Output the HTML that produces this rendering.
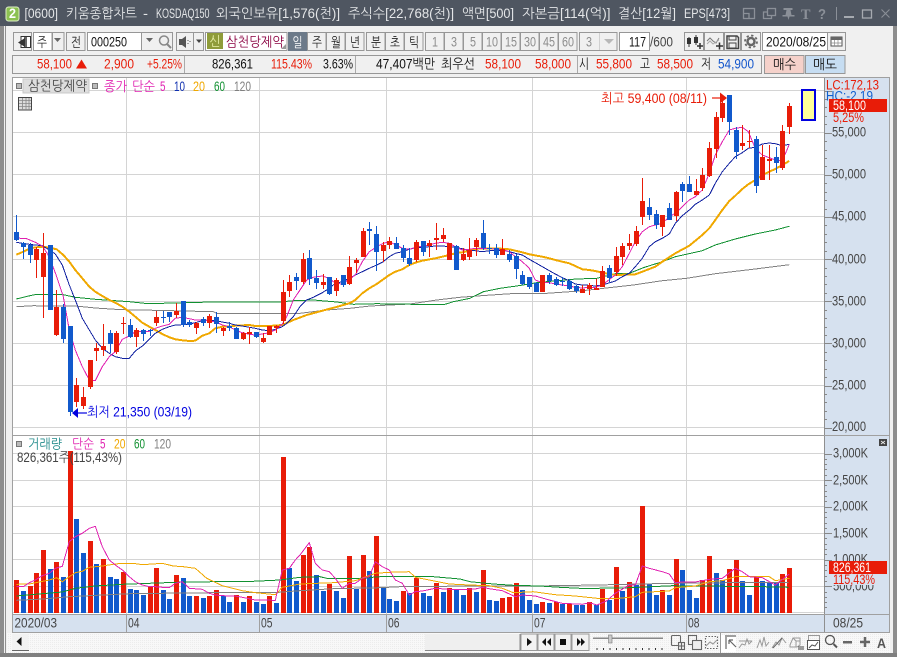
<!DOCTYPE html>
<html lang="ko"><head><meta charset="utf-8"><title>키움종합차트</title>
<style>
html,body{margin:0;padding:0;background:#f0f0f0;width:897px;height:657px;overflow:hidden}
svg{display:block;position:absolute;left:0;top:0}
text{font-family:"Liberation Sans","NanumGothic","Noto Sans CJK KR",sans-serif;font-size:13.5px;fill:#222}
.t text{fill:#e4e6e8}
.b{fill:#f0f0f0;stroke:#979797}
.g{stroke:#d4d4d4;stroke-width:1;shape-rendering:crispEdges}
.r{fill:#e81c08!important}.u{fill:#1155cc!important}.a{fill:#444!important}.d{fill:#8c8c8c!important}
.ic{fill:none;stroke:#555;stroke-width:1}
</style></head><body>
<svg width="897" height="657" viewBox="0 0 897 657" xmlns="http://www.w3.org/2000/svg">
<defs><pattern id="dot" width="2" height="2" patternUnits="userSpaceOnUse"><rect width="2" height="2" fill="#f8f8f8"/><rect width="1" height="1" fill="#ececec"/></pattern></defs>
<rect width="897" height="657" fill="#f0f0f0"/>
<!-- outer border -->
<rect x="0" y="26" width="4" height="631" fill="#8d8d8d"/><rect x="5" y="26" width="1" height="627" fill="#909090"/>
<rect x="893" y="26" width="4" height="631" fill="#8d8d8d"/><rect x="0" y="653" width="897" height="4" fill="#7f7f7f"/>
<!-- title bar -->
<rect width="897" height="26" fill="#4f5661"/>
<rect x="6" y="7" width="13" height="14" rx="2.5" fill="#8cc152" stroke="#dff0c8"/>
<text x="9" y="18" textLength="7" lengthAdjust="spacingAndGlyphs" style="fill:#fff;font-weight:bold">2</text>
<g class="t">
<text x="24.5" y="18" textLength="33.5" lengthAdjust="spacingAndGlyphs">[0600]</text>
<text x="66" y="18" textLength="71" lengthAdjust="spacingAndGlyphs">키움종합차트</text>
<text x="143" y="18" textLength="5" lengthAdjust="spacingAndGlyphs">-</text>
<text x="156" y="18" textLength="53.5" lengthAdjust="spacingAndGlyphs">KOSDAQ150</text>
<text x="216" y="18" textLength="124" lengthAdjust="spacingAndGlyphs">외국인보유[1,576(천)]</text>
<text x="348" y="18" textLength="106" lengthAdjust="spacingAndGlyphs">주식수[22,768(천)]</text>
<text x="462" y="18" textLength="52" lengthAdjust="spacingAndGlyphs">액면[500]</text>
<text x="522" y="18" textLength="88.5" lengthAdjust="spacingAndGlyphs">자본금[114(억)]</text>
<text x="618" y="18" textLength="58" lengthAdjust="spacingAndGlyphs">결산[12월]</text>
<text x="684" y="18" textLength="46" lengthAdjust="spacingAndGlyphs">EPS[473]</text>
</g>
<g fill="none" stroke="#8b9098" stroke-width="1.3">
<rect x="743.5" y="8.5" width="11" height="10"/><path d="M744 13.5h5v5"/>
<rect x="767.5" y="8.5" width="8" height="7"/><path d="M767 12h-3.5v6.5h8v-3"/>
</g>
<g fill="#8b9098"><path d="M785 8h9v2h-2l1 5h3v1.500h-5l-1 3.500-1-3.500h-5v-1.500h3l1-5h-3z" transform="translate(-1.500 0)"/>
<text x="801" y="19" textLength="9.500" lengthAdjust="spacingAndGlyphs" style="fill:#8b9098;font-family:'Liberation Serif';font-weight:bold;font-size:15px">T</text>
<text x="818" y="19" textLength="8" lengthAdjust="spacingAndGlyphs" style="fill:#8b9098;font-weight:bold;font-size:15px">?</text>
<rect x="836" y="7" width="1" height="13" fill="#8b9098"/></g>
<rect x="844" y="16" width="10" height="2" fill="#a6aab0"/>
<rect x="862.500" y="10" width="9" height="8" fill="none" stroke="#a6aab0" stroke-width="1.300"/>
<path d="M881.500 9.500l8 8m0-8l-8 8" stroke="#8b9098" stroke-width="1.100"/>

<!-- row 1 toolbar -->
<g shape-rendering="crispEdges">
<rect class="b" x="13.500" y="32.500" width="18" height="18"/>
<rect class="b" x="33.500" y="32.500" width="18.500" height="18" style="fill:#fff"/>
<rect class="b" x="52.500" y="32.500" width="11.500" height="18"/>
<rect class="b" x="66.500" y="32.500" width="18.500" height="18"/>
<rect class="b" x="87.500" y="32.500" width="54" height="18" style="fill:#fff"/>
<rect class="b" x="141.500" y="32.500" width="31" height="18"/>
<rect class="b" x="176.500" y="32.500" width="17" height="18"/>
<rect class="b" x="193.500" y="32.500" width="10" height="18"/>
<rect class="b" x="205.500" y="32.500" width="81.500" height="18" style="fill:#fff"/>
<rect x="207" y="33" width="16" height="16" fill="#8f9c3a"/>
<rect x="288" y="32" width="19" height="19" fill="#6c7a89"/>
<rect class="b" x="307.500" y="32.500" width="18.500" height="18"/>
<rect class="b" x="326.500" y="32.500" width="18.500" height="18"/>
<rect class="b" x="345.500" y="32.500" width="18.500" height="18"/>
<rect class="b" x="366.500" y="32.500" width="18.500" height="18"/>
<rect class="b" x="385.500" y="32.500" width="18.500" height="18"/>
<rect class="b" x="404.500" y="32.500" width="18.500" height="18"/>
<rect class="b" x="425.500" y="32.500" width="18.500" height="18"/>
<rect class="b" x="444.500" y="32.500" width="18.500" height="18"/>
<rect class="b" x="463.500" y="32.500" width="18.500" height="18"/>
<rect class="b" x="482.500" y="32.500" width="18.500" height="18"/>
<rect class="b" x="501.500" y="32.500" width="18.500" height="18"/>
<rect class="b" x="520.500" y="32.500" width="18.500" height="18"/>
<rect class="b" x="539.500" y="32.500" width="18.500" height="18"/>
<rect class="b" x="558.500" y="32.500" width="18.500" height="18"/>
<rect class="b" x="579.500" y="32.500" width="37.500" height="18"/>
<rect x="599" y="33" width="1" height="17" fill="#d0d0d0"/>
<rect class="b" x="619.500" y="32.500" width="30" height="18" style="fill:#fff"/>
<rect class="b" x="684.500" y="32.500" width="19" height="18"/>
<rect class="b" x="704.500" y="32.500" width="19" height="18"/>
<rect class="b" x="724.500" y="32.500" width="16" height="18"/>
<rect class="b" x="741.500" y="32.500" width="19" height="18"/>
<rect class="b" x="762.500" y="32.500" width="65" height="18" style="fill:#fff"/>
<rect class="b" x="827.500" y="32.500" width="18" height="18"/>
</g>
<!-- row1 icons -->
<rect x="21" y="36.500" width="9.500" height="11" fill="#fff" stroke="#333"/><rect x="24" y="37" width="3" height="10" fill="#666"/>
<path d="M25 38v9l-7-4.500z" fill="#333"/>
<path d="M54 38h7l-3.500 4z" fill="#666"/><path d="M146 38h7l-3.500 4z" fill="#666"/><path d="M196 39.500h6l-3 3.500z" fill="#444"/><path d="M605 39h10l-5 5z" fill="#b8b8b8" transform="translate(-1 0) scale(1 1)"/>
<circle cx="164" cy="40.500" r="4.500" fill="none" stroke="#888" stroke-width="1.500"/><path d="M167 44l4 4" stroke="#888" stroke-width="2"/>
<path d="M179 39h3l4-3v12l-4-3h-3z" fill="#555"/><path d="M188 40v1m0 2v1m2-3v1" stroke="#555"/>
<path d="M286 49v-5l-5 5z" fill="#999"/>
<path d="M689 37v10M696 35v10" stroke="#333"/><rect x="687" y="38" width="4" height="6" fill="#333"/><rect x="694" y="37" width="4" height="6" fill="#333"/><path d="M697 46h6m-3-3v6" stroke="#333" stroke-width="1.500"/>
<path d="M707 41l3-3 3 3 3 2 3-5" fill="none" stroke="#777"/><path d="M707 44l3-3 3 3 3-2 3-2" fill="none" stroke="#aaa"/><path d="M716 46h7m-3.500-3.500v7" stroke="#333" stroke-width="1.500"/>
<path d="M727 36h10l1.500 1.500v11h-11.500z" fill="none" stroke="#444" stroke-width="1.500"/><rect x="729" y="36" width="7" height="4" fill="none" stroke="#444"/><rect x="729" y="43" width="7" height="5" fill="none" stroke="#444"/>
<circle cx="751" cy="41.500" r="3.500" fill="none" stroke="#666" stroke-width="2.500"/><circle cx="751" cy="41.500" r="6" fill="none" stroke="#666" stroke-width="1.800" stroke-dasharray="2.300 2.400"/>
<rect x="831" y="37" width="11" height="9" fill="#fff" stroke="#555"/><rect x="831" y="37" width="11" height="3" fill="#666"/><path d="M834.500 40v6m3.500-6v6M831 43h11" stroke="#888" stroke-width=".7"/>
<!-- row1 text -->
<text x="37" y="47" textLength="10" lengthAdjust="spacingAndGlyphs">주</text>
<text x="71" y="47" textLength="10" lengthAdjust="spacingAndGlyphs">전</text>
<text x="91" y="46.500" textLength="36" lengthAdjust="spacingAndGlyphs" style="fill:#111">000250</text>
<text x="209.500" y="46" textLength="11" lengthAdjust="spacingAndGlyphs" style="fill:#e8f0a8">신</text>
<text x="226" y="46.500" textLength="58" lengthAdjust="spacingAndGlyphs" style="fill:#8a0040">삼천당제약</text>
<text x="292.500" y="47" textLength="10" lengthAdjust="spacingAndGlyphs" style="fill:#fff">일</text>
<text x="312" y="47" textLength="10" lengthAdjust="spacingAndGlyphs">주</text>
<text x="331" y="47" textLength="10" lengthAdjust="spacingAndGlyphs">월</text>
<text x="350" y="47" textLength="10" lengthAdjust="spacingAndGlyphs">년</text>
<text x="371" y="47" textLength="10" lengthAdjust="spacingAndGlyphs">분</text>
<text x="390" y="47" textLength="10" lengthAdjust="spacingAndGlyphs">초</text>
<text x="409" y="47" textLength="10" lengthAdjust="spacingAndGlyphs">틱</text>
<g class="grey">
<text class="d" x="432" y="46.500" textLength="6" lengthAdjust="spacingAndGlyphs">1</text>
<text class="d" x="451" y="46.500" textLength="6" lengthAdjust="spacingAndGlyphs">3</text>
<text class="d" x="470" y="46.500" textLength="6" lengthAdjust="spacingAndGlyphs">5</text>
<text class="d" x="486" y="46.500" textLength="12" lengthAdjust="spacingAndGlyphs">10</text>
<text class="d" x="505" y="46.500" textLength="12" lengthAdjust="spacingAndGlyphs">15</text>
<text class="d" x="524" y="46.500" textLength="12" lengthAdjust="spacingAndGlyphs">30</text>
<text class="d" x="543" y="46.500" textLength="12" lengthAdjust="spacingAndGlyphs">45</text>
<text class="d" x="562" y="46.500" textLength="12" lengthAdjust="spacingAndGlyphs">60</text>
<text class="d" x="586" y="46.500" textLength="6" lengthAdjust="spacingAndGlyphs">3</text>
</g>
<text x="629" y="46.500" textLength="17" lengthAdjust="spacingAndGlyphs" style="fill:#111">117</text>
<text x="650" y="46.500" textLength="23" lengthAdjust="spacingAndGlyphs" class="a">/600</text>
<text x="766" y="46.500" textLength="60" lengthAdjust="spacingAndGlyphs" style="fill:#111">2020/08/25</text>

<!-- row 2 -->
<g shape-rendering="crispEdges">
<rect class="b" x="12.500" y="55.500" width="749" height="18"/>
<rect x="184" y="56" width="1" height="17" fill="#aaa"/><rect x="355" y="56" width="1" height="17" fill="#aaa"/><rect x="577" y="56" width="1" height="17" fill="#aaa"/>
<rect x="764.500" y="55.500" width="39.500" height="18" fill="#f5d1ca" stroke="#979797"/>
<rect x="805.500" y="55.500" width="39.500" height="18" fill="#c6ddf2" stroke="#979797"/>
</g>
<path d="M76 68.500l5.500-9 5.500 9z" fill="#e81c08"/>
<g>
<text class="r" x="37" y="68.500" textLength="35" lengthAdjust="spacingAndGlyphs">58,100</text>
<text class="r" x="104" y="68.500" textLength="30" lengthAdjust="spacingAndGlyphs">2,900</text>
<text class="r" x="147" y="68.500" textLength="35" lengthAdjust="spacingAndGlyphs">+5.25%</text>
<text x="212" y="68.500" textLength="41" lengthAdjust="spacingAndGlyphs" style="fill:#111">826,361</text>
<text class="r" x="271" y="68.500" textLength="41" lengthAdjust="spacingAndGlyphs">115.43%</text>
<text x="323" y="68.500" textLength="30" lengthAdjust="spacingAndGlyphs" style="fill:#111">3.63%</text>
<text x="376" y="68.500" textLength="59" lengthAdjust="spacingAndGlyphs" style="fill:#111">47,407백만</text>
<text x="441" y="68.500" textLength="34" lengthAdjust="spacingAndGlyphs" style="fill:#111">최우선</text>
<text class="r" x="485" y="68.500" textLength="36" lengthAdjust="spacingAndGlyphs">58,100</text>
<text class="r" x="535" y="68.500" textLength="36" lengthAdjust="spacingAndGlyphs">58,000</text>
<text x="579" y="68.500" textLength="10" lengthAdjust="spacingAndGlyphs" style="fill:#111">시</text>
<text class="r" x="596" y="68.500" textLength="36" lengthAdjust="spacingAndGlyphs">55,800</text>
<text x="640" y="68.500" textLength="10" lengthAdjust="spacingAndGlyphs" style="fill:#111">고</text>
<text class="r" x="657" y="68.500" textLength="36" lengthAdjust="spacingAndGlyphs">58,500</text>
<text x="701" y="68.500" textLength="10" lengthAdjust="spacingAndGlyphs" style="fill:#111">저</text>
<text class="u" x="718" y="68.500" textLength="36" lengthAdjust="spacingAndGlyphs">54,900</text>
<text x="773" y="69" textLength="23" lengthAdjust="spacingAndGlyphs" style="fill:#111">매수</text>
<text x="813" y="69" textLength="24" lengthAdjust="spacingAndGlyphs" style="fill:#111">매도</text>
</g>

<!-- chart frame -->
<rect x="13" y="78" width="811" height="536" fill="#fff"/>
<rect x="824" y="78" width="65" height="536" fill="#d6e1ef"/>
<rect x="13" y="614" width="876" height="18" fill="#d6e1ef"/>
<g class="g">
<path d="M13 90.500h811M13 132.500h811M13 174.500h811M13 216.500h811M13 259.500h811M13 301.500h811M13 343.500h811M13 385.500h811M13 427.500h811"/>
<path d="M13 453.500h811M13 480.500h811M13 506.500h811M13 533.500h811M13 559.500h811M13 586.500h811M13 612.500h811"/>
<path d="M126.500 78v536M259.500 78v536M386.500 78v536M532.500 78v536M686.500 78v536"/>
</g>
<g id="vol"></g>
<g id="price"></g>

<!-- frame lines over -->
<g shape-rendering="crispEdges" fill="#a0a0a0">
<rect x="12" y="77" width="878" height="1"/><rect x="12" y="77" width="1" height="556"/><rect x="889" y="77" width="1" height="556"/>
<rect x="824" y="78" width="1" height="554" fill="#8f8f8f"/>
<rect x="13" y="435" width="876" height="1"/><rect x="13" y="614" width="876" height="1"/><rect x="13" y="632" width="877" height="1"/>
<rect x="126" y="615" width="1" height="17"/><rect x="259" y="615" width="1" height="17"/><rect x="386" y="615" width="1" height="17"/><rect x="532" y="615" width="1" height="17"/><rect x="686" y="615" width="1" height="17"/>
</g>
<g id="ticks"></g>

<!-- legends -->
<rect x="16.500" y="83.500" width="5" height="5" fill="#bbb" stroke="#777"/>
<rect x="23" y="79" width="66" height="14" fill="#dedede" stroke="#c8c8c8"/>
<text x="28" y="90.500" textLength="59" lengthAdjust="spacingAndGlyphs" class="a">삼천당제약</text>
<rect x="92.500" y="83.500" width="5" height="5" fill="#bbb" stroke="#777"/>
<text x="104" y="91" textLength="23" lengthAdjust="spacingAndGlyphs" style="fill:#e020b0">종가</text>
<text x="132" y="91" textLength="23" lengthAdjust="spacingAndGlyphs" style="fill:#e020b0">단순</text>
<text x="160" y="91" textLength="5.500" lengthAdjust="spacingAndGlyphs" style="fill:#e020b0">5</text>
<text x="174" y="91" textLength="11" lengthAdjust="spacingAndGlyphs" style="fill:#1030b0">10</text>
<text x="193" y="91" textLength="12" lengthAdjust="spacingAndGlyphs" style="fill:#f0a800">20</text>
<text x="214" y="91" textLength="11" lengthAdjust="spacingAndGlyphs" style="fill:#109030">60</text>
<text x="234" y="91" textLength="17" lengthAdjust="spacingAndGlyphs" style="fill:#808080">120</text>
<rect x="18.500" y="97.500" width="13" height="12.500" fill="#ddd" stroke="#444"/><path d="M19 100.500h12M19 103.500h12M19 106.500h12M22.500 98v12M26 98v12M29 98v12" stroke="#888" stroke-width=".8"/>

<!-- markers -->
<text class="r" x="601" y="103" textLength="106" lengthAdjust="spacingAndGlyphs">최고 59,400 (08/11)</text>
<path d="M712 98h9" stroke="#e81c08" stroke-width="1.200"/><path d="M720 92.500l7 5.500-7 5.500z" fill="#e81c08"/>
<text x="87" y="416.500" textLength="105" lengthAdjust="spacingAndGlyphs" style="fill:#0000e0">최저 21,350 (03/19)</text>
<path d="M77 413h10" stroke="#0000e0" stroke-width="1.200"/><path d="M72 413l6-5v10z" fill="#0000e0"/>
<rect x="802" y="90" width="13" height="30" fill="#ffff99" stroke="#0000e0" stroke-width="2"/>

<!-- price axis labels -->
<g class="ax">
<text class="a" x="832" y="136.500" textLength="34" lengthAdjust="spacingAndGlyphs">55,000</text>
<text class="a" x="832" y="178.500" textLength="34" lengthAdjust="spacingAndGlyphs">50,000</text>
<text class="a" x="832" y="220.500" textLength="34" lengthAdjust="spacingAndGlyphs">45,000</text>
<text class="a" x="832" y="263.500" textLength="34" lengthAdjust="spacingAndGlyphs">40,000</text>
<text class="a" x="832" y="305.500" textLength="34" lengthAdjust="spacingAndGlyphs">35,000</text>
<text class="a" x="832" y="347.500" textLength="34" lengthAdjust="spacingAndGlyphs">30,000</text>
<text class="a" x="832" y="389.500" textLength="34" lengthAdjust="spacingAndGlyphs">25,000</text>
<text class="a" x="832" y="431" textLength="34" lengthAdjust="spacingAndGlyphs">20,000</text>
</g>
<text class="r" x="826" y="89.500" textLength="53" lengthAdjust="spacingAndGlyphs">LC:172,13</text>
<text x="826" y="100.500" textLength="47" lengthAdjust="spacingAndGlyphs" style="fill:#1060d0">HC:-2,19</text>
<rect x="829" y="99" width="58" height="13" fill="#e81c08"/>
<text x="833" y="110" textLength="33" lengthAdjust="spacingAndGlyphs" style="fill:#fff">58,100</text>
<rect x="829" y="112" width="40" height="11" fill="#d6e1ef"/>
<text class="r" x="833" y="122" textLength="31" lengthAdjust="spacingAndGlyphs">5,25%</text>

<!-- volume legend -->
<rect x="16.500" y="441.500" width="5" height="5" fill="#bbb" stroke="#777"/>
<text x="28" y="448.500" textLength="34" lengthAdjust="spacingAndGlyphs" style="fill:#208a8a">거래량</text>
<text x="72" y="448.500" textLength="22" lengthAdjust="spacingAndGlyphs" style="fill:#e020b0">단순</text>
<text x="100" y="448.500" textLength="5.500" lengthAdjust="spacingAndGlyphs" style="fill:#e020b0">5</text>
<text x="114" y="448.500" textLength="11.500" lengthAdjust="spacingAndGlyphs" style="fill:#f0a800">20</text>
<text x="134" y="448.500" textLength="11" lengthAdjust="spacingAndGlyphs" style="fill:#109030">60</text>
<text x="154" y="448.500" textLength="17" lengthAdjust="spacingAndGlyphs" style="fill:#808080">120</text>
<rect x="879" y="439" width="8" height="7" fill="#444"/><path d="M881 441l4 3m0-3l-4 3" stroke="#eee" stroke-width=".8"/>

<!-- volume axis labels -->
<text class="a" x="833" y="457.500" textLength="35" lengthAdjust="spacingAndGlyphs">3,000K</text>
<text class="a" x="833" y="484.500" textLength="35" lengthAdjust="spacingAndGlyphs">2,500K</text>
<text class="a" x="833" y="510.500" textLength="35" lengthAdjust="spacingAndGlyphs">2,000K</text>
<text class="a" x="833" y="537.500" textLength="35" lengthAdjust="spacingAndGlyphs">1,500K</text>
<text class="a" x="833" y="563.500" textLength="35" lengthAdjust="spacingAndGlyphs">1,000K</text>
<text class="a" x="833" y="590.500" textLength="41" lengthAdjust="spacingAndGlyphs">500,000</text>
<rect x="829" y="574" width="50" height="11" fill="#d6e1ef"/>
<rect x="829" y="561" width="58" height="13" fill="#e81c08"/>
<text x="833" y="572" textLength="38" lengthAdjust="spacingAndGlyphs" style="fill:#fff">826,361</text>
<text class="r" x="833" y="584" textLength="42" lengthAdjust="spacingAndGlyphs">115,43%</text>

<!-- date axis labels -->
<text class="a" x="14.500" y="627.500" textLength="42.500" lengthAdjust="spacingAndGlyphs">2020/03</text>
<text class="a" x="128" y="627.500" textLength="11.500" lengthAdjust="spacingAndGlyphs">04</text>
<text class="a" x="261" y="627.500" textLength="11.500" lengthAdjust="spacingAndGlyphs">05</text>
<text class="a" x="388" y="627.500" textLength="11.500" lengthAdjust="spacingAndGlyphs">06</text>
<text class="a" x="534" y="627.500" textLength="11.500" lengthAdjust="spacingAndGlyphs">07</text>
<text class="a" x="688" y="627.500" textLength="11.500" lengthAdjust="spacingAndGlyphs">08</text>
<text class="a" x="833" y="627.500" textLength="30" lengthAdjust="spacingAndGlyphs">08/25</text>

<!-- bottom bar -->
<rect x="7" y="633" width="883" height="20" fill="url(#dot)"/>
<rect x="12" y="634" width="16.500" height="16.500" fill="#f2f2f2"/><path d="M12 650.500h17" stroke="#666"/>
<path d="M21.500 637v9l-5-4.500z" fill="#111"/>
<rect x="425" y="634" width="95" height="16" fill="#efefef"/><path d="M425 650.500h95M520 634v17" stroke="#888"/>
<g shape-rendering="crispEdges">
<rect x="521" y="634" width="16" height="16.500" fill="#f2f2f2" stroke="#999"/>
<rect x="538" y="634" width="16" height="16.500" fill="#f2f2f2" stroke="#999"/>
<rect x="555" y="634" width="16" height="16.500" fill="#f2f2f2" stroke="#999"/>
<rect x="572" y="634" width="17" height="16.500" fill="#f2f2f2" stroke="#999"/>
</g>
<path d="M527 638v8l5-4z" fill="#111"/>
<path d="M546 638v8l-4-4zM551 638v8l-4-4z" fill="#111"/>
<rect x="560" y="639" width="6" height="6" fill="#111"/>
<path d="M577 638v8l4-4zM581 638v8l4-4z" fill="#111"/>
<rect x="593" y="637.500" width="70" height="1.500" fill="#888"/>
<rect x="608.500" y="635" width="3.500" height="8" fill="#ccc" stroke="#777" stroke-width=".6"/>
<path d="M597 648v2M603.500 648v2M610 648v2M616.500 648v2M623 648v2M629.500 648v2M636 648v2M642.500 648v2M649 648v2M655.500 648v2M662 648v2" stroke="#333"/>
<g fill="none" stroke="#666" stroke-width="1.100">
<rect x="671.500" y="635.500" width="9" height="10" rx="1"/><rect x="678.500" y="642.500" width="6" height="7" fill="#eee"/><path d="M681.500 643v6m-3-3h6"/>
<rect x="688.500" y="635.500" width="8" height="9"/><rect x="692.500" y="640.500" width="9" height="9" fill="#eee"/>
<rect x="705.500" y="636.500" width="12" height="12" stroke-dasharray="1.500 1.500"/><path d="M706 646l4-4 3 2 4-4" stroke="#999"/>
</g>
<rect x="720" y="633" width="1" height="20" fill="#999"/><rect x="721" y="635" width="15" height="17" fill="#fff"/>
<path d="M725 636h11M726 637v12M729 640l7 7M729 640h4m-4 0v4" fill="none" stroke="#666" stroke-width="1.200"/>
<g fill="none" stroke="#9a9a9a">
<path d="M739 648l3-4 3 1 2-6 2 5 3-3"/><path d="M739 641h13"/>
<path d="M757 648l3-8 2 6 2-9 2 9 3-4"/>
<path d="M772 648l4-6 3 3 3-7 4 5"/><path d="M773 648l9-10" stroke="#666"/>
<path d="M790 645l3-7h7v7l-3 2h-7z"/><path d="M793 638l3 3h4M796 641v6"/><path d="M799 650v-4m2 4v-4m2 4v-4" stroke="#444"/>
<rect x="808.500" y="635.500" width="11" height="8" stroke="#999"/><rect x="807.500" y="640.500" width="12" height="9" stroke="#555" fill="#fff"/><path d="M809 648l3-3 3 1 3-4" stroke="#555"/>
</g>
<circle cx="830" cy="640" r="4.500" fill="none" stroke="#555" stroke-width="1.300"/><path d="M833.500 644l3.500 3.500" stroke="#555" stroke-width="2"/>
<rect x="843" y="641" width="9" height="2.500" fill="#666"/>
<path d="M865 637v10M860 642h10" stroke="#666" stroke-width="2.500"/>
<text x="877" y="648" textLength="9" lengthAdjust="spacingAndGlyphs" style="fill:#555;font-weight:bold;font-size:14px">A</text>
<text x="17" y="462" textLength="105" lengthAdjust="spacingAndGlyphs" class="a">826,361주(115,43%)</text>
</svg>
<script>
(function(){
var NS="http://www.w3.org/2000/svg";
function el(p,n,a){var e=document.createElementNS(NS,n);for(var k in a)e.setAttribute(k,a[k]);p.appendChild(e);return e;}
var R="#e81c08",B="#1159cc";
function X(n){return Math.round(16.3+6.66*n);}
/* candles: colour, wick top, body top, body bottom, wick bottom */
var C="b215,232,240,241 b242,243,247,259 b243,245,255,263 r247,249,260,278 r233,253,277,318 b245,245,310,310 r290,307,335,336 b304,307,339,343 b326,326,412,416 r378,385,402,407 r387,397,406,409 r360,360,387,389 r343,348,351,361 r324,346,350,356 b330,333,344,353 r331,333,352,354 r317,323,324,334 b319,325,337,338 r328,330,337,347 b329,330,334,341 b329,330,331,336 r311,317,323,326 b311,317,318,323 b312,312,317,322 r303,311,315,318 b301,301,325,327 b320,322,325,327 r322,323,328,334 b317,319,323,326 r314,316,323,328 b312,317,324,333 r327,328,331,336 b322,326,328,331 b327,328,339,339 r332,333,339,340 r327,332,334,344 b332,332,337,338 r333,338,342,343 r326,326,335,335 r325,326,328,333 r280,292,321,324 r275,282,291,297 b273,277,281,290 r253,259,282,284 b250,258,279,285 b270,278,283,289 r274,282,285,289 b277,277,294,295 r278,280,291,296 b275,275,285,287 r256,267,284,285 r258,260,263,273 r228,231,257,257 b222,229,231,245 b226,234,252,271 r242,245,251,262 r237,241,245,249 b237,243,249,249 b245,248,258,262 b248,258,264,266 r240,242,260,262 b241,241,252,256 r240,243,246,257 r223,238,240,250 r228,235,239,242 r243,243,260,260 b245,246,270,270 r248,254,260,261 r238,250,257,260 r238,240,247,256 b220,233,248,250 b244,248,249,254 b244,248,255,258 r239,249,255,255 b250,254,260,262 b254,256,269,279 b271,275,284,285 b277,277,287,289 b282,283,292,292 r275,275,292,292 b273,275,281,284 b277,279,285,286 b277,281,282,286 b279,281,289,290 b285,286,291,293 r285,289,293,293 r283,285,289,295 r279,288,290,290 r266,271,287,287 b265,268,278,282 r247,256,272,276 r243,246,257,265 r234,243,246,250 r226,231,244,246 r178,201,217,225 b198,207,215,220 b210,214,225,229 r215,215,227,236 b203,208,220,220 r191,192,216,221 b182,184,191,202 b176,184,192,192 r179,191,195,195 r168,175,188,191 r142,148,176,177 r112,117,149,158 r98,103,118,122 b95,95,122,135 b127,130,152,159 r125,143,146,150 r130,141,142,148 b136,139,186,193 r145,157,180,180 r145,159,161,180 b147,157,163,173 r125,131,168,170 r103,106,127,134".split(" ");
/* volume tops */
var V6="R450 B483 R468 R429 R360 B417 R396 B441 R63 B267 B369 R333 B402 R387 B441 B447 R426 B477 B480 B495 R471 R414 B480 B507 R435 B444 B498 R498 B504 R498 R480 B498 B516 R495 B516 R498 B516 B522 R498 B519 R81 B414 B453".split(" ");
var V7="R105 R81 B165 B213 R192 B213 B234 R108 B207 R105 B153 R48 B204 B237 B243 R213 B219 R174 B219 B228 R189 B216 R204 B210 B225 R204 B216 R150 B240 B243 R234 R231 R189 B210 B240 B252 R246 B249 R246 B252 R252 B255 B255 R246 B255".split(" ");
var V8="R476 B510 R411 B482 R456 B465 R228 B462 B495 R480 B495 R387 B420 B480 B504 R450 R378 B429 B450 R417 R390 B453 B495 R441 B453 B459 B459 R432 R414".split(" ");
function merge(a,o){var out=[];for(var s=0;s<a.length;s++){var p=a[s],z=o[s];for(var i=0;i<p.length;i+=2){var x=z[0]+p[i]/3,y=z[1]+p[i+1]/3;if(x>=z[2]&&x<z[3])out.push(x.toFixed(1)+","+y.toFixed(1));}}return out.join(" ");}
var PZ=[[0,210,0,283],[280,210,283,608],[600,85,608,900]];
var VZ=[[0,430,0,300],[300,520,300,597],[597,430,597,900]];
var P=[
 ["#e020b0",1,[49,84,80,86,106,97,127,108,148,140,170,200,190,260,208,360,226,420,247,470,268,510,286,512,307,470,328,440,346,425,367,388,388,378,406,365,448,364,466,355,487,348,508,343,526,325,547,322,568,326,586,330,607,330,628,333,646,335,667,345,688,350,706,360,727,368,748,373,766,375,787,372,808,368,826,360,847,342],
  [7,340,20,320,40,270,60,240,80,210,100,202,127,198,148,205,166,220,187,222,208,208,226,195,247,155,268,125,290,110,310,100,328,95,346,104,367,115,388,118,406,112,427,108,448,105,466,100,487,97,508,100,526,110,547,120,568,118,586,115,607,115,628,115,646,118,667,118,688,125,706,140,727,155,748,175,766,210,787,218,808,218,826,222,847,225,868,228,886,232,907,234,928,232,946,232,967,225,990,215],
  [46,570,67,545,88,505,106,470,127,440,148,425,166,420,187,415,208,395,226,385,247,365,268,345,286,335,307,315,328,265,346,210,367,170,388,135,406,130,427,127,445,140,466,190,487,210,508,218,526,225,547,228,568,178]],
 ["#1020a0",1,[49,97,67,100,88,103,106,105,127,107,148,120,166,132,187,165,208,225,226,270,247,325,268,360,286,390,307,415,328,430,346,440,367,445,388,445,406,423,427,408,448,388,466,370,487,358,508,350,526,345,547,344,568,342,586,338,607,332,628,330,646,332,667,336,688,340,706,345,727,348,748,352,766,355,787,360,808,362,826,358,847,350],
  [7,350,20,340,40,320,60,290,80,270,100,262,127,248,148,235,166,220,187,215,208,205,226,195,247,185,268,175,290,165,310,155,328,140,346,130,367,125,388,118,406,113,427,112,448,110,466,108,487,108,508,110,526,112,547,116,568,122,586,122,607,125,628,122,646,122,667,120,688,125,706,130,727,135,748,148,766,158,787,170,808,182,826,192,847,203,868,212,886,222,907,225,928,226,946,228,967,225,990,220],
  [46,588,67,575,88,565,106,545,127,520,148,485,166,470,187,460,208,447,226,415,247,392,268,375,286,358,307,345,328,330,346,295,367,260,388,235,406,215,427,203,445,190,466,187,487,177,508,174,526,176,547,182,568,178]],
 ["#f0a800",2,[49,134,70,125,90,115,110,112,127,110,148,113,170,118,190,135,208,155,226,180,247,205,268,230,286,245,307,258,328,270,346,278,367,290,388,305,406,320,427,338,448,350,466,360,487,372,508,382,526,388,547,391,568,393,586,392,607,377,628,370,646,355,667,350,688,350,706,347,748,345,766,348,808,348,847,345],
  [7,343,40,330,80,315,127,302,166,292,208,280,226,270,247,250,268,235,290,222,310,208,328,195,346,185,367,178,388,165,406,158,427,152,466,145,487,140,508,135,526,130,547,127,568,122,586,117,607,115,646,115,688,118,706,122,727,127,748,133,787,140,808,145,826,150,847,155,868,160,886,168,907,178,928,180,946,183,967,188,990,190],
  [46,570,106,568,127,560,166,545,187,530,226,505,268,482,307,450,328,430,346,405,367,375,388,348,406,332,427,312,445,298,466,285,487,270,508,260,526,252,547,240,568,228]],
 ["#109030",1,[49,267,70,262,90,257,110,253,190,254,226,262,286,268,346,272,388,275,445,281,550,278,640,276,840,276],
  [7,275,40,272,100,270,170,276,220,283,290,281,400,283,495,283,520,275,570,265,610,245,660,235,710,228,770,218,830,212,890,207,950,205,990,205],
  [46,566,88,565,130,548,187,530,226,515,307,497,346,480,406,462,466,447,526,435,568,424]],
 ["#808080",1,[49,290,100,287,148,288,226,288,286,294,346,298,400,300,466,301,640,305,650,310,840,310],
  [7,310,60,310,140,300,210,295,270,288,390,282,470,270,540,262,620,256,710,250,800,250,900,243,990,238],
  [46,606,100,600,187,587,260,580,346,566,466,552,568,539]]
];
var VL=[
 ["#808080",1,[49,511,130,507,208,500,290,496,390,491,480,490,640,488,820,488,900,481],[0,212,100,206,240,203,300,200,520,198,700,198,900,197],[0,465,225,460,400,458,575,458]],
 ["#109030",1,[49,498,127,491,187,486,226,475,286,468,367,463,448,460,528,457,640,455,760,454,840,450,900,443],[0,172,60,170,85,176,180,175,240,170,400,170,480,177,510,185,580,192,640,196,720,198,780,202,840,205,900,206],[0,475,100,473,225,467,300,468,400,469,500,470,575,472]],
 ["#f0a800",1,[49,463,88,462,148,450,170,443,187,455,208,440,226,428,247,424,268,412,307,408,346,402,367,400,400,400,427,404,487,400,520,408,550,410,586,415,620,445,667,467,727,482,766,488,826,494,847,472,900,468],[0,192,50,190,100,188,166,182,226,160,268,157,328,155,346,172,388,180,448,192,508,195,568,197,607,205,640,218,700,215,766,224,826,228,900,236],[0,505,55,506,115,500,136,487,175,485,217,483,235,473,295,468,337,455,376,452,415,440,475,440,517,440,535,452,577,445]],
 ["#e020b0",1,[49,470,70,470,88,458,106,450,127,437,148,430,166,415,187,409,208,335,226,320,247,310,268,295,286,289,307,350,328,390,346,405,367,420,388,440,406,455,427,465,448,470,466,470,487,472,508,473,526,460,547,455,568,475,607,478,628,490,646,495,667,497,706,498,727,502,766,510,826,511,847,420,868,415,886,390,900,378],[0,105,28,68,46,130,67,150,88,155,106,175,127,205,148,190,166,190,187,175,208,170,226,125,247,140,268,150,286,180,307,190,328,225,346,215,367,213,406,205,448,208,500,208,526,207,547,202,568,206,607,212,646,230,667,225,706,228,748,240,787,250,847,253,868,248,900,248],[0,525,30,512,55,490,97,465,115,465,136,408,157,415,196,425,217,432,235,458,256,456,295,456,337,448,376,445,415,415,436,425,457,440,496,443,535,465,577,432]]
];
var price=document.getElementById("price"),vol=document.getElementById("vol"),ticks=document.getElementById("ticks");
var ce="crispEdges";
/* volume bars */
var all=V6.concat(V7,V8),n,t;
for(n=0;n<all.length;n++){
  var tv=+all[n].slice(1),oy=n<43?430:(n<88?520:430);
  var y=Math.round(oy+tv/3);
  el(vol,"rect",{x:X(n)-2,y:y,width:5,height:613-y,fill:all[n][0]=="R"?R:B,"shape-rendering":ce});
}
VL.forEach(function(l){el(vol,"polyline",{points:merge([l[2],l[3],l[4]],VZ),fill:"none",stroke:l[0],"stroke-width":l[1],"shape-rendering":ce});});
/* moving averages, then candles */
P.slice().reverse().forEach(function(l){el(price,"polyline",{points:merge([l[2],l[3],l[4]],PZ),fill:"none",stroke:l[0],"stroke-width":l[1],"shape-rendering":ce});});
C.forEach(function(s,i){
  var c=s[0]=="r"?R:B,v=s.slice(1).split(",").map(Number),x=X(i);
  el(price,"rect",{x:x,y:v[0],width:1,height:Math.max(1,v[3]-v[0]),fill:c,"shape-rendering":ce});
  el(price,"rect",{x:x-2,y:v[1],width:5,height:Math.max(1,v[2]-v[1]),fill:c,"shape-rendering":ce});
});
/* axis ticks */
for(t=0;t<41;t++){var yy=Math.round(90.5+t*8.43);if(yy<435){el(ticks,"rect",{x:824,y:yy,width:t%5==0?8:3,height:1,fill:"#888","shape-rendering":ce});}}
for(t=0;t<31;t++){var y2=Math.round(453.5+t*5.31);if(y2<613){el(ticks,"rect",{x:824,y:y2,width:t%5==0?8:3,height:1,fill:"#888","shape-rendering":ce});}}
})();
</script>
</body></html>
